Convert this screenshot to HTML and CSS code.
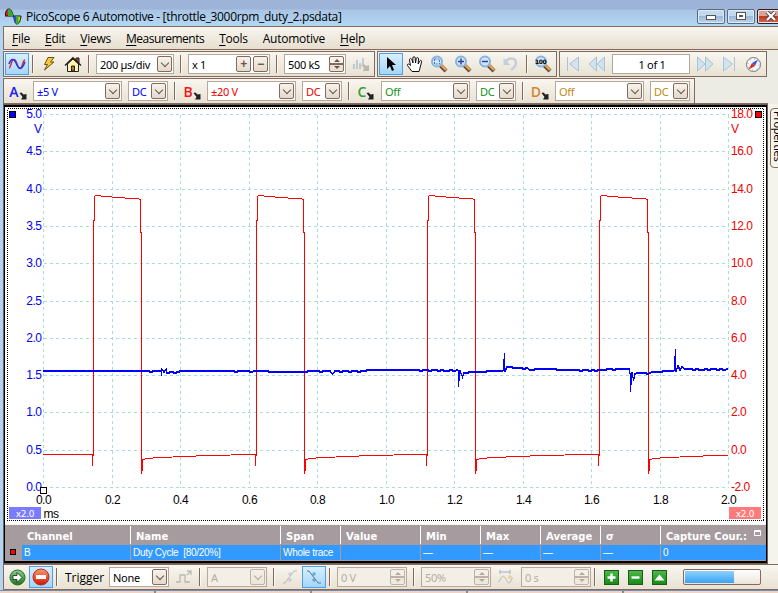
FILE: index.html
```html
<!DOCTYPE html>
<html lang="en">
<head>
    <meta charset="UTF-8">
    <meta name="viewport" content="width=device-width, initial-scale=1.0">
    <title>PicoScope 6 Automotive</title>
    <link rel="stylesheet" href="styles.css">
</head>
<body>
    <!-- Shared icons -->
    <svg class="defs" width="0" height="0">
        <defs>
            <linearGradient id="greenBall" x1="0" y1="0" x2="0" y2="1">
                <stop offset="0" stop-color="#8ad08a"/>
                <stop offset="1" stop-color="#157a15"/>
            </linearGradient>
            <linearGradient id="redBall" x1="0" y1="0" x2="0" y2="1">
                <stop offset="0" stop-color="#ff9a70"/>
                <stop offset="1" stop-color="#d01505"/>
            </linearGradient>
            <symbol id="lens" viewBox="0 0 18 18">
                <path d="M10 10l6 6" stroke="#5a4a48" stroke-width="4"/>
                <path d="M10.500 9.500l5.500 5.500" stroke="#f0a040" stroke-width="2.400"/>
                <circle cx="7" cy="6.500" r="5" fill="#cfe6fa" stroke="#8ab4dc" stroke-width="2"/>
            </symbol>
            <symbol id="probe" viewBox="0 0 8 8">
                <path d="M0.500 1l2-.5L4.500 2.500 7.500 2v5.500H2L3.500 5z" fill="#222"/>
            </symbol>
        </defs>
    </svg>

    <div class="window">
        <header class="titlebar">
            <svg class="app-icon" width="17" height="17" viewBox="0 0 17 17">
                <path d="M0 8C1 2 2 1 4 1s3 3 4.500 7z" fill="#e02020" stroke="#111"/>
                <path d="M3 8V1.500C5.500 0 7 4 8.500 8z" fill="#30b030"/>
                <path d="M8.500 8H16c-.5 5-2 8-4 8s-2.500-3-3.500-8z" fill="#e8d020" stroke="#111"/>
                <path d="M8.700 8H11v7C9.500 13 9 11 8.700 8z" fill="#2050d0"/>
                <path d="M11 8h2.500v7.500H11z" fill="#30b030"/>
            </svg>
            <span class="title">PicoScope 6 Automotive - [throttle_3000rpm_duty_2.psdata]</span>
            <div class="window-buttons">
                <span class="win-btn"><svg width="12" height="10"><rect x="1.500" y="4.500" width="9" height="4" fill="#fff" stroke="#555"/></svg></span>
                <span class="win-btn"><svg width="12" height="10"><rect x="1.500" y="1.500" width="9" height="7" fill="#fff" stroke="#555"/><rect x="4.500" y="4.500" width="3" height="1" fill="#9ab" stroke="#555"/></svg></span>
                <span class="win-btn close"><svg width="12" height="10"><path d="M2 1l8 8M10 1L2 9" stroke="#444" stroke-width="4"/><path d="M2 1l8 8M10 1L2 9" stroke="#fff" stroke-width="2.200"/></svg></span>
            </div>
        </header>

        <nav class="menu">
            <span><u>F</u>ile</span>
            <span><u>E</u>dit</span>
            <span><u>V</u>iews</span>
            <span class="wide"><u>M</u>easurements</span>
            <span><u>T</u>ools</span>
            <span>Automotive</span>
            <span><u>H</u>elp</span>
        </nav>

        <div class="toolbar-row">
            <div class="toolbar">
                <span class="slot active"><svg width="18" height="14"><path d="M1 11C3 11 3 2.500 6 2.500S9 11.500 12 11.500 14 4 17 3" fill="none" stroke="#e02040" stroke-width="1.500"/><path d="M1 7C3 1 6 1 8.500 7S14 13 17 5" fill="none" stroke="#2040d8" stroke-width="1.500"/></svg></span>
                <i class="sep"></i>
                <span class="slot"><svg width="16" height="16"><path d="M7 1.500h6L9.500 6H13L3.500 14l3-5.500H3.500z" fill="#f8c838" stroke="#6a5414"/></svg></span>
                <span class="slot"><svg width="18" height="17"><path d="M12 2h3v5h-3z" fill="#c03020" stroke="#222"/><path d="M3.500 8v7.500h11V8L9 3z" fill="#fff3b0" stroke="#222"/><path d="M1 9.500L9 1.800l8 7.700" fill="none" stroke="#222" stroke-width="1.500"/><path d="M7.500 10h3v5h-3z" fill="#b07818" stroke="#222"/></svg></span>
                <i class="sep"></i>
                <span class="field w78">200 µs/div<b class="drop"></b></span>
                <i class="sep"></i>
                <span class="field w82">x 1<b class="step">+</b><b class="step">−</b></span>
                <i class="sep"></i>
                <span class="field w62">500 kS<b class="spin"></b></span>
                <span class="slot faded"><svg width="17" height="15"><path d="M1 12V7M4 12V3M7 12V6M10 7V1" stroke="#96a8c4" stroke-width="2"/><path d="M8 8l3-1 2 2 3-1v6h-6l1-3z" fill="#888"/></svg></span>
            </div>
            <div class="toolbar">
                <span class="slot active"><svg width="12" height="16"><path d="M2 1v12l3-3 2 5 2-1-2-5h4z" fill="#000"/></svg></span>
                <span class="slot"><svg width="18" height="17"><path d="M6 15.500L1.500 9.500c-.5-2 1.500-2 3 0L3.500 4c0-2 2-2 2.500 0l1 3-.2-5c.2-1.800 2.200-1.800 2.400 0L9.500 7l.8-4.500c.4-1.500 2.200-1.200 2.200.5L12.200 8l1.500-3c.8-1.300 2.300-.6 1.900.8L14 12l-1 3.500z" fill="#fff" stroke="#111"/></svg></span>
                <span class="slot"><svg width="18" height="18"><use href="#lens"/><rect x="4.500" y="4" width="5" height="5" fill="none" stroke="#4878b8" stroke-dasharray="2 1"/></svg></span>
                <span class="slot"><svg width="18" height="18"><use href="#lens"/><path d="M4 6.500h6M7 3.500v6" stroke="#3040a8" stroke-width="1.500"/></svg></span>
                <span class="slot"><svg width="18" height="18"><use href="#lens"/><path d="M4 6.500h6" stroke="#3040a8" stroke-width="1.500"/></svg></span>
                <span class="slot"><svg width="18" height="16"><path d="M4 5c4-4 10-3 10 2 0 4-3 5-5 7" fill="none" stroke="#c4cedc" stroke-width="2.500"/><path d="M1.500 2v7h7z" fill="#c4cedc"/></svg></span>
                <i class="sep"></i>
                <span class="slot"><svg width="18" height="18"><use href="#lens"/><text x="1" y="8.500" class="lens-text">100</text></svg></span>
            </div>
            <div class="toolbar">
                <span class="slot"><svg width="14" height="16"><path d="M1.500 1v14M12.500 1v14L3.500 8z" fill="#d4e4ee" stroke="#a8c4d8"/></svg></span>
                <span class="slot"><svg width="18" height="16"><path d="M8.500 1v14L1 8zM16.500 1v14L9 8z" fill="#d0e2ee" stroke="#a8c4d8"/></svg></span>
                <span class="field w78 center">1 of 1</span>
                <span class="slot"><svg width="18" height="16"><path d="M1.500 1v14L9 8zM9.500 1v14L17 8z" fill="#d0e2ee" stroke="#a8c4d8"/></svg></span>
                <span class="slot"><svg width="14" height="16"><path d="M12.500 1v14M1.500 1v14l9-7z" fill="#d4e4ee" stroke="#a8c4d8"/></svg></span>
                <span class="slot"><svg width="17" height="17"><circle cx="8.500" cy="8.500" r="7" fill="#f6f8fa" stroke="#777"/><circle cx="8.500" cy="8.500" r="5.500" fill="none" stroke="#999" stroke-dasharray="1 3.300"/><path d="M13 3.500L7 7l3 3z" fill="#3858d8"/><path d="M3.500 13.500L7 7l3 3z" fill="#e02818"/></svg></span>
            </div>
        </div>

        <div class="toolbar-row second">
            <div class="toolbar channels">
                <span class="slot chan chan-a">A<svg width="8" height="8"><use href="#probe"/></svg></span>
                <span class="field w89 blue">±5 V<b class="drop"></b></span>
                <span class="field w40 blue">DC<b class="drop"></b></span>
                <i class="sep"></i>
                <span class="slot chan chan-b">B<svg width="8" height="8"><use href="#probe"/></svg></span>
                <span class="field w89 red">±20 V<b class="drop"></b></span>
                <span class="field w40 red">DC<b class="drop"></b></span>
                <i class="sep"></i>
                <span class="slot chan chan-c">C<svg width="8" height="8"><use href="#probe"/></svg></span>
                <span class="field w89 green">Off<b class="drop"></b></span>
                <span class="field w40 green">DC<b class="drop"></b></span>
                <i class="sep"></i>
                <span class="slot chan chan-d">D<svg width="8" height="8"><use href="#probe"/></svg></span>
                <span class="field w89 gold">Off<b class="drop"></b></span>
                <span class="field w40 gold">DC<b class="drop"></b></span>
            </div>
        </div>

        <main class="workspace">
            <div class="view">
                <svg class="scope" id="scope" width="761" height="417" viewBox="5 107 761 417"></svg>
                <div class="measurements">
                    <div class="row head">
                        <span></span><span>Channel</span><span>Name</span><span>Span</span><span>Value</span><span>Min</span><span>Max</span><span>Average</span><span>σ</span>
                        <span class="last">Capture Cour.:<svg width="7" height="7"><path d="M.5 .5h6v5h-6zM0 1.500h7" fill="none" stroke="#fff"/></svg></span>
                    </div>
                    <div class="row data">
                        <span class="mark"><i></i></span><span>B</span><span>Duty Cycle&nbsp; [80/20%]</span><span>Whole trace</span><span></span><span>—</span><span>—</span><span>—</span><span>—</span><span>0</span>
                    </div>
                </div>
            </div>
            <aside class="side"><div class="tab">Properties</div></aside>
        </main>

        <footer class="toolbar bottom">
            <span class="slot"><svg width="17" height="17"><circle cx="8.500" cy="8.500" r="7.500" fill="url(#greenBall)" stroke="#2c6a2c"/><path d="M4 6.500h4V3.500l5 5-5 5v-3H4z" fill="#fff" stroke="#222" stroke-width=".8"/></svg></span>
            <span class="slot active"><svg width="18" height="18"><circle cx="9" cy="9" r="8" fill="url(#redBall)" stroke="#b83018"/><rect x="4" y="7" width="10" height="4" fill="#fff"/></svg></span>
            <i class="sep"></i>
            <span class="label">Trigger</span>
            <span class="field w60">None<b class="drop"></b></span>
            <span class="slot faded"><svg width="18" height="16"><path d="M1 13h4V6h5v7h5M12 6l4-4M12 2h4v4" fill="none" stroke="#888" stroke-width="1.300"/></svg></span>
            <i class="sep"></i>
            <span class="field w60 off">A<b class="drop"></b></span>
            <i class="sep"></i>
            <span class="slot faded"><svg width="16" height="14"><path d="M1 13h2L12 1h3" fill="none" stroke="#888"/><path d="M6 4h4M8 2v4M6 10h4M8 8v4" stroke="#88a0c8"/></svg></span>
            <span class="slot active"><svg width="16" height="14"><path d="M1 1h2l9 12h3" fill="none" stroke="#5a7a90"/><path d="M6 4h4M8 2v4M6 10h4M8 8v4" stroke="#4a9ad0"/></svg></span>
            <i class="sep"></i>
            <span class="field w70 off">0 V<b class="spin"></b></span>
            <i class="sep"></i>
            <span class="field w70 off">50%<b class="spin"></b></span>
            <span class="slot faded"><svg width="18" height="16"><path d="M3 3h10M3 1v4M13 1v4" stroke="#5070b0"/><path d="M1 13C3 13 4 7 6 7s4 7 6 7 2-5 4-5" fill="none" stroke="#888"/><circle cx="13" cy="8" r="2" fill="#d8c860"/></svg></span>
            <span class="field w70 off tight">0 s<b class="spin"></b></span>
            <i class="sep"></i>
            <span class="slot"><svg class="tile" width="15" height="15"><path d="M2.500 6.500h8M6.500 2.500v8" stroke="#fff" stroke-width="2.400"/></svg></span>
            <span class="slot"><svg class="tile" width="15" height="15"><path d="M2.500 6.500h8" stroke="#fff" stroke-width="2.400"/></svg></span>
            <span class="slot"><svg class="tile" width="15" height="15"><path d="M1.500 9.500h10l-5-6z" fill="#fff"/></svg></span>
            <div class="progress"><div class="bar"></div></div>
        </footer>
        <div class="taskbar"><i></i><i></i><i></i><i></i><i></i></div>
    </div>

    <script>
        const NS = 'http://www.w3.org/2000/svg';
        const scope = document.getElementById('scope');
        const LEFT = 43.5, RIGHT = 728.5, TOP = 114.5, BOTTOM = 487.5;

        function add(tag, attrs, text) {
            const el = document.createElementNS(NS, tag);
            for (const key in attrs) el.setAttribute(key, attrs[key]);
            if (text) el.textContent = text;
            scope.appendChild(el);
            return el;
        }

        // Focus border
        add('rect', { x: 7.5, y: 108.5, width: 756, height: 412, class: 'focus' });

        // Grid and axis labels
        for (let i = 0; i <= 10; i++) {
            const x = Math.floor(LEFT + i * (RIGHT - LEFT) / 10) + 0.5;
            const y = Math.floor(TOP + i * (BOTTOM - TOP) / 10) + 0.5;
            add('path', { d: `M${x} ${TOP}V${BOTTOM}`, class: 'grid' });
            add('path', { d: `M${LEFT} ${y}H${RIGHT}`, class: 'grid' });
            add('text', { x: 41.5, y: y + 3.5, class: 'axis blue-axis' }, (5 - i * 0.5).toFixed(1));
            add('text', { x: 731, y: y + 3.5, class: 'axis red-axis' }, (18 - i * 2).toFixed(1));
            add('text', { x: x, y: 504, class: 'axis time-axis' }, (i * 0.2).toFixed(1));
        }
        add('text', { x: 41.5, y: 133, class: 'axis blue-axis' }, 'V');
        add('text', { x: 731, y: 133, class: 'axis red-axis' }, 'V');
        add('text', { x: 51, y: 518, class: 'axis time-axis' }, 'ms');

        // Channel B pulses: rising edge x, falling edge x
        const pulses = [[93, 141], [256, 304], [427, 475], [599, 648]];
        let red = 'M43 455L50 454.500';
        pulses.forEach(([up, down], i) => {
            const next = i < 3 ? pulses[i + 1][0] : 728;
            red += `L${up - 3} 454.500H${up - 0.5}V466V455H${up + 0.5}V220H${up + 1}V197L${up + 3} 195.500L${up + 12} 196.500L${down - 2} 199H${down - 0.5}V232H${down + 0.5}V474V461L${down + 1.5} 471V460L${down + 5} 458.500L${down + 20} 457.500`;
            red += `L${Math.min(down + 55, next)} 456L${Math.min(down + 90, next)} 455`;
        });
        add('path', { d: red, class: 'trace red-trace' });

        // Channel A: base level plus a small ripple
        const keys = [[43, 371], [160, 371], [161.5, 371], [161.5, 375], [161.5, 369], [164, 372], [166.5, 369], [167, 373], [172, 372],
            [185, 371], [255, 371], [285, 372], [330, 371], [332.5, 374], [335, 371], [400, 370], [458, 370], [458.5, 386], [460, 371],
            [462.5, 377], [464, 373], [470, 372], [503, 371], [504.5, 354], [505, 371], [507, 367], [515, 368], [540, 369], [575, 370], [629, 369],
            [630, 373], [630.5, 391], [632, 373], [633.5, 380], [635, 374], [637, 373], [645, 373], [652, 372], [674, 371], [675.5, 350], [676, 371], [678, 366],
            [680, 370], [682, 367], [688, 369], [728, 369]];
        let blue = 'M43 371.500';
        for (let i = 1; i < keys.length; i++) {
            const [x0, y0] = keys[i - 1], [x1, y1] = keys[i];
            for (let x = x0 + 3; x < x1 - 2; x += 3) {
                const ripple = Math.sin(x * 1.7) * Math.sin(x * 0.37) > 0.45 ? 1 : 0;
                blue += `L${x} ${Math.round(y0 + (y1 - y0) * (x - x0) / (x1 - x0)) + ripple}.5`;
            }
            blue += `L${x1} ${y1 + 0.5}`;
        }
        add('path', { d: blue, class: 'trace blue-trace' });
        add('path', { d: blue, class: 'trace blue-trace', transform: 'translate(0 -1)' });

        // Handles and zoom badges
        add('rect', { x: 9.5, y: 111.5, width: 6, height: 6, fill: '#00f', stroke: '#000' });
        add('rect', { x: 755.5, y: 111.5, width: 6, height: 6, fill: '#f00', stroke: '#000' });
        add('rect', { x: 40.5, y: 487.5, width: 6, height: 6, fill: '#fff', stroke: '#000' });
        add('rect', { x: 9, y: 507, width: 32, height: 12, fill: '#7b7bff' });
        add('text', { x: 25, y: 517, class: 'badge' }, 'x2.0');
        add('rect', { x: 729, y: 507, width: 32, height: 12, fill: '#ff7b7b' });
        add('text', { x: 745, y: 517, class: 'badge' }, 'x2.0');
    </script>
</body>
</html>
```
FILE: styles.css
```css
* {
    margin: 0;
    padding: 0;
    box-sizing: border-box;
}

body {
    width: 778px;
    height: 593px;
    overflow: hidden;
    background-color: #b4d5f2;
    font-family: "Open Sans", "Noto Sans", sans-serif;
    font-size: 12px;
    color: #000;
}

.defs {
    display: block;
}

.window {
    display: flex;
    flex-direction: column;
    height: 593px;
}

.titlebar {
    display: flex;
    align-items: center;
    height: 26px;
    padding: 6px 0 0 5px;
    background: linear-gradient(#9db3d7 0, #9db3d7 9px, #a9c4e4 10px, #b2d8f4 26px);
}

.title {
    margin-left: 4px;
    letter-spacing: -0.33px;
    white-space: nowrap;
}

.window-buttons {
    display: flex;
    gap: 2px;
    margin-left: auto;
    margin-right: -7px;
}

.win-btn {
    display: flex;
    align-items: center;
    justify-content: center;
    width: 28px;
    height: 15px;
    border: 1px solid #5a6a80;
    border-radius: 2px;
    box-shadow: inset 0 0 0 1px #dceafa;
    background: linear-gradient(#c4d8ee 50%, #9cb8d8 50%, #b8d4ee);
}

.win-btn.close {
    background: linear-gradient(#e0a090 45%, #c03820 50%, #d86850);
    border-color: #401818;
}

.menu {
    display: flex;
    gap: 15px;
    height: 24px;
    margin-left: 3px;
    padding: 3px 0 0 8px;
    border: 1px solid #84695c;
    border-right: none;
    background: linear-gradient(#f8f5ef, #e6dfd0);
    letter-spacing: -0.25px;
    line-height: 17px;
}

.menu .wide {
    letter-spacing: -0.5px;
}

.menu u {
    text-underline-offset: 2px;
}

.toolbar-row {
    display: flex;
    gap: 2px;
    height: 28px;
    margin-left: 3px;
    padding-top: 1px;
    background-color: #edece4;
}

.toolbar-row.second {
    height: 26px;
    padding-top: 0;
}

.toolbar {
    display: flex;
    align-items: center;
    height: 26px;
    padding: 0 1px;
    border: 1px solid #84695c;
    background: linear-gradient(#f9f6f0, #e8e2d3);
}

.slot {
    display: flex;
    flex: none;
    align-items: center;
    justify-content: center;
    width: 24px;
    height: 22px;
}

.slot.active {
    border: 1px solid #4a9ff0;
    background: linear-gradient(#d8effd, #a4d6f8);
}

.slot.faded {
    opacity: 0.5;
}

.sep {
    flex: none;
    width: 2px;
    height: 18px;
    margin: 0 3px;
    background: linear-gradient(90deg, #84695c 50%, #fbf9f4 50%);
}

.field {
    display: flex;
    flex: none;
    align-items: center;
    height: 20px;
    margin: 0 3px;
    padding: 0 1px 0 3px;
    border: 1px solid #b8a89c;
    background-color: #fff;
    font-family: "Noto Sans", sans-serif;
    font-size: 11px;
    letter-spacing: -0.3px;
    white-space: nowrap;
}

.field b:first-of-type {
    margin-left: auto;
}

.w40 { width: 40px; }
.w60 { width: 60px; }
.w62 { width: 62px; }
.w70 { width: 70px; }
.w78 { width: 78px; }
.w82 { width: 82px; }
.w89 { width: 89px; }

.center {
    justify-content: center;
}

.drop,
.step,
.spin {
    display: flex;
    align-items: center;
    justify-content: center;
    width: 15px;
    height: 16px;
    border: 1px solid #84695c;
    border-radius: 2px;
    background: linear-gradient(#f7f3ec, #e2dacb);
}

.drop::before {
    content: "";
    width: 5px;
    height: 5px;
    margin-top: -3px;
    border: solid #6b554a;
    border-width: 0 1px 1px 0;
    transform: rotate(45deg);
}

.step {
    margin-left: 2px;
    color: #6b554a;
    font: bold 12px/14px "Liberation Sans", sans-serif;
}

.spin {
    flex-direction: column;
    justify-content: space-around;
    background: linear-gradient(#f7f3ec 46%, #84695c 46%, #84695c 54%, #e9e2d5 54%);
}

.spin::before,
.spin::after {
    content: "";
    border: 3px solid transparent;
    border-top-width: 0;
    border-bottom-color: #6b554a;
}

.spin::after {
    transform: rotate(180deg);
}

.off {
    background-color: #f3efe6;
    color: #b5aca2;
}

.off b {
    opacity: 0.45;
}

.field.tight {
    margin-right: 0;
}

.blue { color: #0000f0; }
.red { color: #f00000; }
.green { color: #189018; }
.gold { color: #c08a10; }

.channels .field + .field {
    margin-left: 3px;
}

.channels .slot {
    width: 25px;
}

.chan {
    padding-left: 1px;
    font-size: 14px;
    font-weight: 600;
}

.chan svg {
    margin-top: 9px;
}

.chan-a { color: #2020f0; }
.chan-b { color: #f01818; }
.chan-c { color: #30a030; }
.chan-d { color: #d08830; }

.lens-text {
    font: bold 6px "DejaVu Sans", sans-serif;
    letter-spacing: -0.4px;
}

.workspace {
    display: flex;
    height: 460px;
    margin-left: 3px;
    background-color: #f5f4ec;
}

.view {
    width: 765px;
    border: solid #000;
    border-width: 3px 2px 3px 2px;
    outline: 1px solid #6b625a;
    outline-offset: -1px;
    box-shadow: 0 -1px 0 #84695c;
    background-color: #f5f4ec;
}

.scope {
    display: block;
    background-color: #fff;
    shape-rendering: crispEdges;
}

.focus {
    fill: none;
    stroke: #000;
    stroke-dasharray: 1 1;
}

.grid {
    fill: none;
    stroke: #a8dce4;
    stroke-dasharray: 3 3;
}

.axis {
    font: 12px "Liberation Sans", Arial, sans-serif;
    letter-spacing: -0.5px;
}

.blue-axis {
    fill: #0000f0;
    text-anchor: end;
}

.red-axis {
    fill: #f00000;
}

.time-axis {
    text-anchor: middle;
}

.trace {
    fill: none;
    stroke-width: 1;
}

.red-trace { stroke: #f00; }
.blue-trace { stroke: #00f; }

.badge {
    fill: #fff;
    font: 9px "DejaVu Sans", sans-serif;
    text-anchor: middle;
    letter-spacing: -0.3px;
}

.measurements {
    margin-top: 1px;
    color: #fff;
}

.row {
    display: grid;
    grid-template-columns: 15px 109px 150px 60px 80px 60px 60px 60px 60px 1fr;
    padding-left: 1px;
}

.head {
    height: 20px;
    background-color: #a69b9f;
    font: bold 10px/22px "DejaVu Sans", sans-serif;
}

.head span {
    height: 18px;
    margin-top: 1px;
    padding-left: 5px;
    border-left: 1px solid #fff;
    white-space: nowrap;
}

.head span:nth-child(-n+2) {
    border-left-color: transparent;
}

.head .last {
    display: flex;
    justify-content: space-between;
    padding-right: 5px;
}

.head .last svg {
    margin-top: 4px;
}

.data {
    height: 16px;
    border-bottom: 1px solid #a69b9f;
    background: linear-gradient(90deg, #a69b9f 2px, #3299ff 2px);
    font: 10px/16px "Liberation Sans", Arial, sans-serif;
    letter-spacing: -0.3px;
}

.data span {
    padding-left: 2px;
    border-left: 1px solid #a69b9f;
    white-space: nowrap;
}

.data .mark {
    padding: 4px 0 0 3px;
    background-color: #a69b9f;
}

.mark i {
    display: block;
    width: 6px;
    height: 6px;
    border: 1px solid #000;
    background-color: #f00;
}

.side {
    width: 10px;
    padding: 4px 0 0 2px;
    overflow: hidden;
}

.tab {
    width: 15px;
    height: 60px;
    padding-top: 2px;
    border: 1px solid #84695c;
    border-radius: 4px;
    background-color: #f7f4ec;
    font: 11px/12px "Noto Sans", sans-serif;
    letter-spacing: -0.3px;
    writing-mode: vertical-rl;
}

.bottom {
    height: 26px;
    margin-left: 3px;
    border-right: none;
}

.label {
    width: 45px;
    padding-left: 4px;
    font-size: 12px;
}

.tile {
    border: 1px solid #1d5a1d;
    background: linear-gradient(#4cb848, #168a16);
}

.progress {
    width: 78px;
    height: 16px;
    margin-left: 12px;
    padding: 1px;
    border: 1px solid #84695c;
    border-radius: 2px;
    background: linear-gradient(#fff, #ece4dc);
}

.bar {
    width: 49px;
    height: 12px;
    background: linear-gradient(#8fd0ff, #3aa4f4);
}

.taskbar {
    display: flex;
    gap: 2px;
    flex: 1;
    border-top: 1px solid #6a90c0;
    background-color: #9a887c;
}

.taskbar i {
    flex: 1;
    background-color: #f2d2c0;
}
```
